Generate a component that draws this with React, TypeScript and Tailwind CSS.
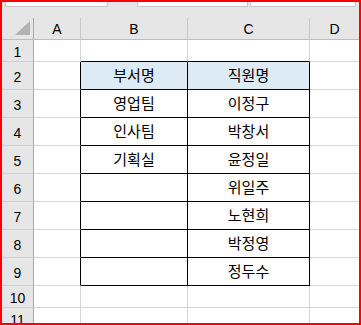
import React from "react";

const rows: { n: number; h: string; b?: string; c?: string; table?: boolean; head?: boolean }[] = [
  { n: 1, h: "h-[22px]" },
  { n: 2, h: "h-[28px]", b: "부서명", c: "직원명", table: true, head: true },
  { n: 3, h: "h-[28px]", b: "영업팀", c: "이정구", table: true },
  { n: 4, h: "h-[28px]", b: "인사팀", c: "박창서", table: true },
  { n: 5, h: "h-[28px]", b: "기획실", c: "윤정일", table: true },
  { n: 6, h: "h-[28px]", b: "", c: "위일주", table: true },
  { n: 7, h: "h-[28px]", b: "", c: "노현희", table: true },
  { n: 8, h: "h-[28px]", b: "", c: "박정영", table: true },
  { n: 9, h: "h-[28px]", b: "", c: "정두수", table: true },
  { n: 10, h: "h-[22px]" },
  { n: 11, h: "h-[22px]" },
];

const kr = { fontFamily: '"Noto Sans CJK KR", "Noto Sans", sans-serif' };
const lat = { fontFamily: '"Liberation Sans", Arial, sans-serif' };

export default function App() {
  return (
    <div className="w-[361px] h-[325px] border-2 border-[#ff0000] overflow-hidden bg-white flex flex-col">
      <div className="h-[16px] bg-[#e6e6e6] flex shrink-0">
        <div className="ml-[3px] w-[103px] h-[5px] bg-white border-x border-b border-[#c6c6c6]" />
        <div className="ml-[29px] w-[111px] h-[5px] bg-white border-x border-b border-[#c6c6c6]" />
        <div className="ml-[2px] w-[106px] h-[5px] bg-white border-x border-b border-[#c6c6c6]" />
      </div>
      <div className="flex h-[22px] shrink-0 bg-[#e6e6e6] border-b border-[#bdbdbd] text-[14px] text-black" style={lat}>
        <div className="w-[32px] shrink-0 border-r border-[#a8a8a8] relative">
          <svg width="16" height="15" viewBox="0 0 16 15" className="absolute left-[13px] top-[3px]">
            <polygon points="15,0 15,14 0,14" fill="#b3b3b3" />
          </svg>
        </div>
        <div className="w-[47px] shrink-0 border-r border-[#c9c9c9] flex items-center justify-center pt-[1px]">A</div>
        <div className="w-[107px] shrink-0 border-r border-[#c9c9c9] flex items-center justify-center pt-[1px]">B</div>
        <div className="w-[122px] shrink-0 border-r border-[#c9c9c9] flex items-center justify-center pt-[1px]">C</div>
        <div className="flex-1 flex items-center justify-center pt-[1px]">D</div>
      </div>
      {rows.map((r) => {
        const nextTable = r.n === 1;
        const bBottom = r.table || nextTable ? "border-[#000000]" : "border-[#d4d4d4]";
        return (
          <div key={r.n} className={`flex ${r.h} shrink-0`}>
            <div
              className="w-[32px] shrink-0 bg-[#e6e6e6] border-r border-b border-r-[#a8a8a8] border-b-[#cfcfcf] flex items-center justify-center pt-[3px] text-[14px] text-black"
              style={lat}
            >
              {r.n}
            </div>
            <div
              className={`w-[47px] shrink-0 border-b border-r border-b-[#d4d4d4] ${r.table ? "border-r-[#000000]" : "border-r-[#d4d4d4]"}`}
            />
            <div
              className={`w-[107px] shrink-0 border-b border-r ${bBottom} ${r.table ? "border-r-[#000000]" : "border-r-[#d4d4d4]"} ${r.head ? "bg-[#ddebf7]" : ""} flex items-center justify-center text-[15px] text-black`}
              style={kr}
            >
              {r.b}
            </div>
            <div
              className={`w-[122px] shrink-0 border-b border-r ${bBottom} ${r.table ? "border-r-[#000000]" : "border-r-[#d4d4d4]"} ${r.head ? "bg-[#ddebf7]" : ""} flex items-center justify-center text-[15px] text-black`}
              style={kr}
            >
              {r.c}
            </div>
            <div className="flex-1 border-b border-[#d4d4d4]" />
          </div>
        );
      })}
    </div>
  );
}
